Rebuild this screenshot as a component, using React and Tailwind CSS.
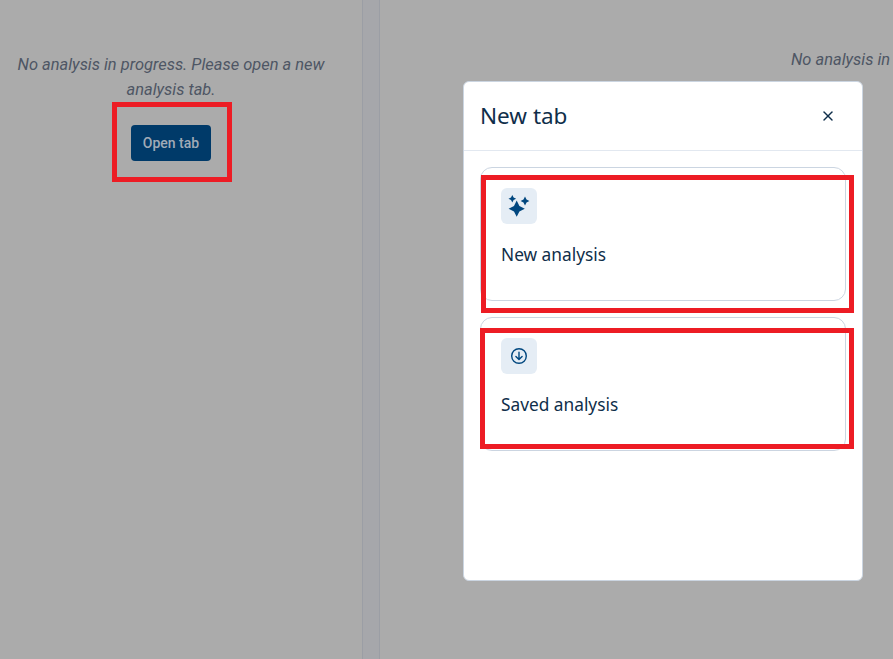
import React from 'react';
import { X } from 'lucide-react';

const EMPTY_TEXT = 'No analysis in progress. Please open a new analysis tab.';

function SparklesIcon() {
  return (
    <svg width="24" height="24" viewBox="0 0 24 24" fill="#00477f">
      <path d="M9.7 6.6 L12.4 12 L17.8 14.7 L12.4 17.4 L9.7 22.8 L7 17.4 L1.6 14.7 L7 12 Z" />
      <path d="M5.3 0.9 L6.6 3.4 L9.1 4.7 L6.6 6 L5.3 8.5 L4 6 L1.5 4.7 L4 3.4 Z" />
      <path d="M18 2.6 L19.5 5.5 L22.4 7 L19.5 8.5 L18 11.4 L16.5 8.5 L13.6 7 L16.5 5.5 Z" />
    </svg>
  );
}

function DownIcon() {
  return (
    <svg width="18" height="18" viewBox="0 0 18 18" fill="none" stroke="#00477f" strokeWidth="1.4" strokeLinecap="round" strokeLinejoin="round">
      <circle cx="9" cy="9" r="7.3" />
      <path d="M9 5.2 V12.4 M5.9 9.5 L9 12.6 L12.1 9.5" />
    </svg>
  );
}

function OptionCard({ icon, label }) {
  return (
    <div className="h-[134px] rounded-xl border border-[#cbd5e1] pl-5 pt-5">
      <div className="flex h-9 w-9 items-center justify-center rounded-md bg-[#e5edf5]">{icon}</div>
      <div className="mt-[19px] text-[17.3px] leading-6 text-[#0f2e4a]">{label}</div>
    </div>
  );
}

function Marker({ className }) {
  return <div className={`pointer-events-none absolute border-[5px] border-[#ed1c24] ${className}`} />;
}

export default function App() {
  return (
    <div className="relative flex h-[659px] w-[893px] overflow-hidden bg-[#ababab] font-['Roboto',sans-serif]">
      {/* left pane */}
      <div className="flex w-[362px] shrink-0 flex-col items-center pt-[52px] pr-[20px]">
        <p className="w-[330px] text-center text-[16.45px] leading-[25px] text-[#4e5664] italic">{EMPTY_TEXT}</p>
        <button type="button" className="mt-[23px] h-9 w-20 rounded bg-[#003a69] text-sm font-medium text-[#a0abb7]">
          Open tab
        </button>
      </div>

      {/* divider */}
      <div className="w-[18px] shrink-0 border-x border-[#9b9ea5] bg-[#a6a7ab]" />

      {/* right pane */}
      <div className="min-w-0 flex-1 overflow-hidden pt-[47px]">
        <p className="ml-[411px] text-[16.45px] leading-[25px] whitespace-nowrap text-[#4e5664] italic">No analysis in</p>
      </div>

      {/* modal */}
      <div className="absolute top-[81px] left-[463px] flex h-[500px] w-[400px] flex-col rounded-md border border-[#cbd5e1] bg-white font-['Noto_Sans',sans-serif]">
        <div className="flex h-[69px] shrink-0 items-center justify-between border-b border-[#e2e8f0] pr-[26px] pl-4">
          <h2 className="text-[22.5px] text-[#0f2e4a]">New tab</h2>
          <X size={16} strokeWidth={2.2} color="#0f2e4a" />
        </div>
        <div className="flex flex-col gap-4 px-4 pt-4">
          <OptionCard icon={<SparklesIcon />} label="New analysis" />
          <OptionCard icon={<DownIcon />} label="Saved analysis" />
        </div>
      </div>

      {/* annotations */}
      <Marker className="top-[102px] left-[112px] h-[80px] w-[120px]" />
      <Marker className="top-[175px] left-[481px] h-[138px] w-[373px]" />
      <Marker className="top-[328px] left-[480px] h-[121px] w-[374px]" />
    </div>
  );
}
